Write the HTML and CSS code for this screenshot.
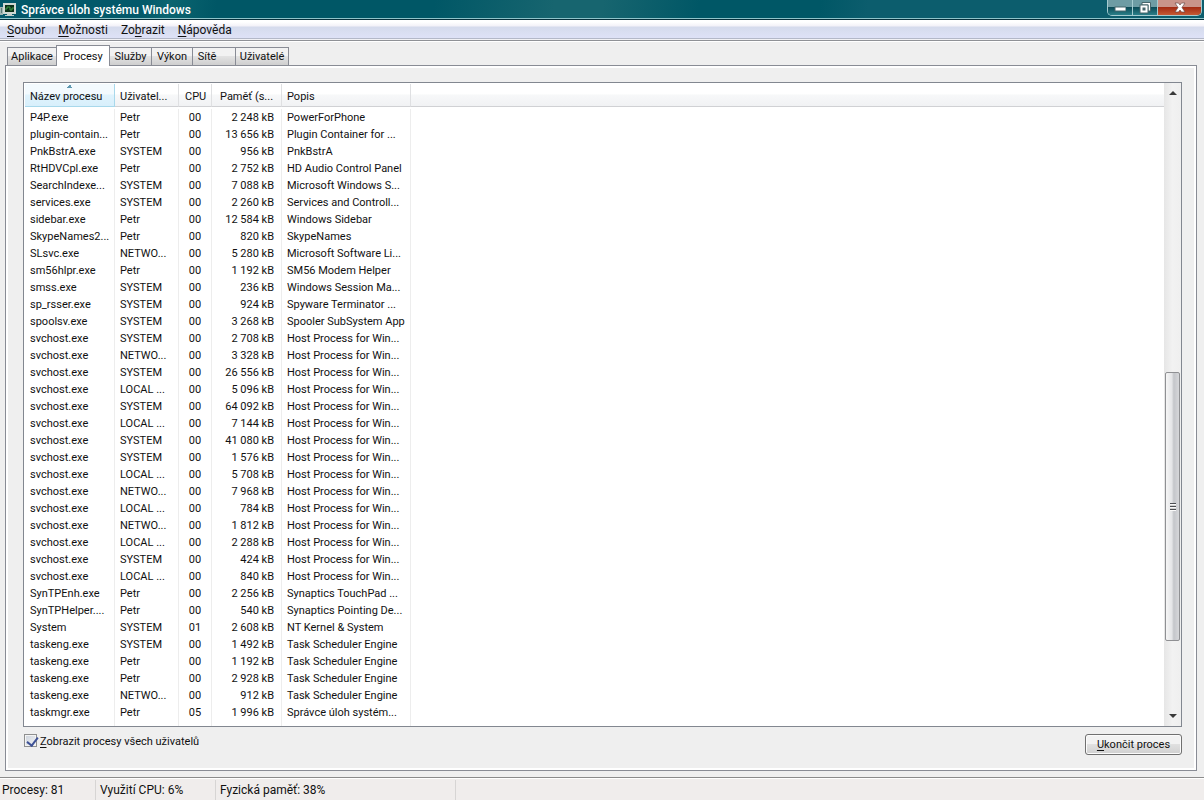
FILE: index.html
```
<!DOCTYPE html>
<html lang="cs">
<head>
<meta charset="utf-8">
<title>Správce úloh systému Windows</title>
<link rel="stylesheet" href="styles.css">
</head>
<body>
<header class="titlebar">
  <svg class="app-icon" width="17" height="16" viewBox="0 0 17 16" aria-hidden="true">
    <rect x="0" y="6" width="3" height="8" fill="#9fb5b2"/>
    <rect x="1" y="7" width="1" height="5" fill="#5e7d78"/>
    <rect x="3" y="2" width="13" height="11" fill="#cfd8d2"/>
    <rect x="5" y="4" width="9" height="7" fill="#0b3018"/>
    <path d="M5 8h2V6h3v3h2V7h2" fill="none" stroke="#3f9a45"/>
    <path d="M7 13h5v1h2v1H5v-1h2z" fill="#c3ceca"/>
  </svg>
  <h1 class="title">Správce úloh systému Windows</h1>
  <div class="window-buttons">
    <button class="wbtn" aria-label="Minimalizovat"><svg width="12" height="12" viewBox="0 0 12 12"><rect x="1" y="5" width="11" height="4" fill="#fff" stroke="#47666c"/></svg></button>
    <button class="wbtn" aria-label="Obnovit"><svg width="12" height="12" viewBox="0 0 12 12"><path d="M3 .5h8.500v8.500H9V3H3z" fill="#fff" stroke="#47666c"/><rect x="1" y="3" width="8" height="8" fill="#fff" stroke="#47666c"/><rect x="4" y="6" width="2" height="2" fill="#47666c" stroke="#47666c"/></svg></button>
    <button class="wbtn close" aria-label="Zavřít"><svg width="12" height="12" viewBox="0 0 12 12"><path d="M1 1h3.500L6 3l1.500-2H11L8 5.500 11 10H7.500L6 8l-1.500 2H1l3-4.500z" fill="#fff" stroke="#6b4a48" stroke-width=".7"/></svg></button>
  </div>
</header>
<nav class="menubar">
  <button class="menu"><u>S</u>oubor</button>
  <button class="menu"><u>M</u>ožnosti</button>
  <button class="menu">Zo<u>b</u>razit</button>
  <button class="menu"><u>N</u>ápověda</button>
</nav>
<main class="main">
  <div class="tabs" role="tablist">
    <button class="tab t1" role="tab">Aplikace</button>
    <button class="tab t2 active" role="tab" aria-selected="true">Procesy</button>
    <button class="tab t3" role="tab">Služby</button>
    <button class="tab t4" role="tab">Výkon</button>
    <button class="tab t5" role="tab">Sítě</button>
    <button class="tab t6" role="tab">Uživatelé</button>
  </div>
  <section class="panel">
    <div class="list">
      <div class="list-view">
        <table class="processes">
          <colgroup><col class="c-name"><col class="c-user"><col class="c-cpu"><col class="c-mem"><col class="c-desc"><col></colgroup>
          <thead><tr><th class="sorted">Název procesu</th><th>Uživatel...</th><th>CPU</th><th>Paměť (s...</th><th>Popis</th><th></th></tr></thead>
          <tbody>
<tr><td>P4P.exe<td>Petr<td>00<td>2 248 kB<td>PowerForPhone<td></tr>
<tr><td>plugin-contain...<td>Petr<td>00<td>13 656 kB<td>Plugin Container for ...<td></tr>
<tr><td>PnkBstrA.exe<td>SYSTEM<td>00<td>956 kB<td>PnkBstrA<td></tr>
<tr><td>RtHDVCpl.exe<td>Petr<td>00<td>2 752 kB<td>HD Audio Control Panel<td></tr>
<tr><td>SearchIndexe...<td>SYSTEM<td>00<td>7 088 kB<td>Microsoft Windows S...<td></tr>
<tr><td>services.exe<td>SYSTEM<td>00<td>2 260 kB<td>Services and Controll...<td></tr>
<tr><td>sidebar.exe<td>Petr<td>00<td>12 584 kB<td>Windows Sidebar<td></tr>
<tr><td>SkypeNames2...<td>Petr<td>00<td>820 kB<td>SkypeNames<td></tr>
<tr><td>SLsvc.exe<td>NETWO...<td>00<td>5 280 kB<td>Microsoft Software Li...<td></tr>
<tr><td>sm56hlpr.exe<td>Petr<td>00<td>1 192 kB<td>SM56 Modem Helper<td></tr>
<tr><td>smss.exe<td>SYSTEM<td>00<td>236 kB<td>Windows Session Ma...<td></tr>
<tr><td>sp_rsser.exe<td>SYSTEM<td>00<td>924 kB<td>Spyware Terminator ...<td></tr>
<tr><td>spoolsv.exe<td>SYSTEM<td>00<td>3 268 kB<td>Spooler SubSystem App<td></tr>
<tr><td>svchost.exe<td>SYSTEM<td>00<td>2 708 kB<td>Host Process for Win...<td></tr>
<tr><td>svchost.exe<td>NETWO...<td>00<td>3 328 kB<td>Host Process for Win...<td></tr>
<tr><td>svchost.exe<td>SYSTEM<td>00<td>26 556 kB<td>Host Process for Win...<td></tr>
<tr><td>svchost.exe<td>LOCAL ...<td>00<td>5 096 kB<td>Host Process for Win...<td></tr>
<tr><td>svchost.exe<td>SYSTEM<td>00<td>64 092 kB<td>Host Process for Win...<td></tr>
<tr><td>svchost.exe<td>LOCAL ...<td>00<td>7 144 kB<td>Host Process for Win...<td></tr>
<tr><td>svchost.exe<td>SYSTEM<td>00<td>41 080 kB<td>Host Process for Win...<td></tr>
<tr><td>svchost.exe<td>SYSTEM<td>00<td>1 576 kB<td>Host Process for Win...<td></tr>
<tr><td>svchost.exe<td>LOCAL ...<td>00<td>5 708 kB<td>Host Process for Win...<td></tr>
<tr><td>svchost.exe<td>NETWO...<td>00<td>7 968 kB<td>Host Process for Win...<td></tr>
<tr><td>svchost.exe<td>LOCAL ...<td>00<td>784 kB<td>Host Process for Win...<td></tr>
<tr><td>svchost.exe<td>NETWO...<td>00<td>1 812 kB<td>Host Process for Win...<td></tr>
<tr><td>svchost.exe<td>LOCAL ...<td>00<td>2 288 kB<td>Host Process for Win...<td></tr>
<tr><td>svchost.exe<td>SYSTEM<td>00<td>424 kB<td>Host Process for Win...<td></tr>
<tr><td>svchost.exe<td>LOCAL ...<td>00<td>840 kB<td>Host Process for Win...<td></tr>
<tr><td>SynTPEnh.exe<td>Petr<td>00<td>2 256 kB<td>Synaptics TouchPad ...<td></tr>
<tr><td>SynTPHelper....<td>Petr<td>00<td>540 kB<td>Synaptics Pointing De...<td></tr>
<tr><td>System<td>SYSTEM<td>01<td>2 608 kB<td>NT Kernel &amp; System<td></tr>
<tr><td>taskeng.exe<td>SYSTEM<td>00<td>1 492 kB<td>Task Scheduler Engine<td></tr>
<tr><td>taskeng.exe<td>Petr<td>00<td>1 192 kB<td>Task Scheduler Engine<td></tr>
<tr><td>taskeng.exe<td>Petr<td>00<td>2 928 kB<td>Task Scheduler Engine<td></tr>
<tr><td>taskeng.exe<td>NETWO...<td>00<td>912 kB<td>Task Scheduler Engine<td></tr>
<tr><td>taskmgr.exe<td>Petr<td>05<td>1 996 kB<td>Správce úloh systém...<td></tr>
<tr><td><td><td><td><td><td></tr>
          </tbody>
        </table>
      </div>
      <div class="scrollbar">
        <button class="arrow" aria-label="Nahoru"><svg width="8" height="4" viewBox="0 0 8 4"><path d="M0 4l4-4 4 4z" fill="#3a3a3a"/></svg></button>
        <div class="track"><div class="space-above"></div><div class="thumb"><span class="grip"></span></div><div class="space-below"></div></div>
        <button class="arrow" aria-label="Dolů"><svg width="8" height="4" viewBox="0 0 8 4"><path d="M0 0l4 4 4-4z" fill="#3a3a3a"/></svg></button>
      </div>
    </div>
    <div class="actions">
      <label class="check"><input type="checkbox" checked><span><u>Z</u>obrazit procesy všech uživatelů</span></label>
      <button class="end"><u>U</u>končit proces</button>
    </div>
  </section>
</main>
<footer class="status">
  <span class="s1">Procesy: 81</span><span class="s2">Využití CPU: 6%</span><span class="s3">Fyzická paměť: 38%</span>
</footer>
</body>
</html>
```
FILE: styles.css
```
* { box-sizing: border-box; }
body {
  margin: 0;
  height: 100vh;
  display: flex;
  flex-direction: column;
  overflow: hidden;
  background: #efefef;
  color: #111;
  font: 12px/16px Roboto, "Noto Sans", sans-serif;
}
button { font: inherit; color: inherit; margin: 0; padding: 0; border: 0; background: none; }
u { text-underline-offset: 2px; }

.titlebar {
  flex: none;
  height: 20px;
  display: flex;
  justify-content: space-between;
  background: linear-gradient(100deg, #03596a 0 12%, #0b6570 14%, #005766 18% 36%, #17656f 46%, #17656f 50%, #005766 58% 68%, #0c5d6d 72% 100%);
  border-bottom: 1px solid #07313c;
  box-shadow: inset 0 -1px #8fc4ca;
}
.app-icon { flex: none; margin-top: 1px; }
.title { flex: 1; margin: 0; padding: 2px 0 0 4px; font-size: 12px; font-weight: 500; line-height: 16px; color: #fff; }
.window-buttons {
  display: flex;
  height: 16px;
  margin-right: 2px;
  border: 1px solid #a5cbd0;
  border-top: 0;
  border-radius: 0 0 5px 5px;
  overflow: hidden;
}
.wbtn {
  width: 25px;
  display: flex;
  align-items: center;
  justify-content: center;
  border-right: 1px solid #a5cbd0;
  background: linear-gradient(#6e9ca4 0 45%, #0c4c58 50%, #2a7f89);
}
.wbtn.close { width: 43px; border: 0; background: linear-gradient(#c9948a 0 45%, #a52c14 50%, #c45a35); }

.menubar {
  flex: none;
  height: 21px;
  display: flex;
  align-items: center;
  gap: 13px;
  padding: 0 7px;
  background: linear-gradient(#fff 0 2px, #f3f1f8 6px, #d5dbec 7px, #dde1f6 17px);
  border-bottom: 1px solid #8f9196;
  box-shadow: inset 0 -1px #f1f1f5, inset 0 -2px #b3b8c8;
}

.main {
  flex: 1;
  min-height: 0;
  display: flex;
  flex-direction: column;
  padding: 3px 7px 6px 5px;
  border-top: 1px solid #fff;
}
.tabs { display: flex; align-items: flex-end; height: 20px; padding-left: 2px; font-size: 11px; }
.tab {
  height: 18px;
  margin-left: -1px;
  border: 1px solid #898c95;
  border-bottom: 0;
  background: linear-gradient(#f2f2f2 0 45%, #e2e2e2 50%, #cfcfcf);
  line-height: 18px;
}
.t1 { width: 50px; margin-left: 0; }
.t2 { width: 54px; }
.t3 { width: 43px; }
.t4 { width: 42px; }
.t5 { width: 44px; padding-right: 14px; }
.t6 { width: 54px; }
.tab.active { height: 21px; margin-bottom: -1px; background: #fff; z-index: 1; line-height: 19px; }

.panel {
  flex: 1;
  min-height: 0;
  display: flex;
  flex-direction: column;
  border: 1px solid #898c95;
  box-shadow: inset 0 0 0 2px #fff;
  padding: 16px 14px 15px 17px;
}
.list {
  flex: 1;
  min-height: 0;
  display: flex;
  border: 1px solid #828790;
  background: #fff;
}
.list-view { flex: 1; min-width: 0; overflow: hidden; padding: 1px 0 0 1px; }
.processes {
  width: 100%;
  table-layout: fixed;
  border-collapse: separate;
  border-spacing: 0;
  font-size: 11px;
  line-height: 17px;
  white-space: nowrap;
}
.c-name { width: 90px; }
.c-user { width: 64px; }
.c-cpu { width: 33px; }
.c-mem { width: 70px; }
.c-desc { width: 129px; }
.processes th {
  height: 23px;
  padding: 2px 0 0 5px;
  font-weight: 400;
  text-align: left;
  border-right: 1px solid #dfe0e2;
  border-bottom: 1px solid #d0d1d4;
  background: linear-gradient(#fff 0 45%, #f7f8f9 50%, #f1f2f4);
}
.processes th:nth-child(3) { padding-left: 6px; }
.processes th:nth-child(4) { padding-left: 8px; }
.processes th.sorted {
  background:
    conic-gradient(from 135deg at 50% 0, #5f98b0 90deg, transparent 0) 50% 1px / 6px 3px no-repeat,
    linear-gradient(#f3fafe 0 45%, #e0f3fd 50%, #d8effb);
  border-color: #a8d8eb;
}
.processes td { height: 17px; padding: 0 0 0 5px; border-right: 1px solid #ededed; }
.processes tbody::before { content: ""; display: table-row; height: 2px; }
.processes td:nth-child(3) { text-align: center; padding: 0; }
.processes td:nth-child(4) { text-align: right; padding-right: 7px; }
.processes th:last-child, .processes td:last-child { border-right: 0; }

.scrollbar { flex: none; width: 17px; display: flex; flex-direction: column; background: linear-gradient(90deg, #e6e6e6, #f2f2f2 50%, #efefef); }
.arrow { height: 20px; display: flex; align-items: center; justify-content: center; }
.track { flex: 1; display: flex; flex-direction: column; padding: 0 1px; }
.space-above { flex: 270; }
.thumb {
  flex: 268;
  display: flex;
  align-items: center;
  justify-content: center;
  border: 1px solid #8f9093;
  border-radius: 2px;
  background: linear-gradient(90deg, #f6f6f6, #e4e5e7 45%, #c4c6ca 60%, #d6d7da);
}
.space-below { flex: 65; }
.grip { width: 6px; height: 8px; background: repeating-linear-gradient(#4c4e52 0 1px, #fafafa 1px 2px, #d0d0d0 2px 3px); }

.actions { flex: none; height: 28px; display: flex; justify-content: space-between; align-items: flex-end; font-size: 11px; }
.check { display: flex; align-items: flex-start; gap: 3px; align-self: flex-start; padding-top: 7px; }
.check input {
  appearance: none;
  width: 13px;
  height: 13px;
  margin: 0 0 0 1px;
  border: 1px solid #8e8f8f;
  background: linear-gradient(135deg, #cbd2dc, #f6f6f6);
  box-shadow: inset 0 0 0 1px #f4f4f4;
  position: relative;
}
.check input:checked::after {
  content: "";
  position: absolute;
  left: 4px;
  top: 0;
  width: 5px;
  height: 9px;
  border: solid #3e5296;
  border-width: 0 2px 2px 0;
  transform: rotate(38deg);
}
.end {
  width: 97px;
  height: 21px;
  border: 1px solid #707070;
  border-radius: 3px;
  box-shadow: inset 0 0 0 1px #fbfbfb;
  background: linear-gradient(#f2f2f2 0 45%, #e0e0e0 50%, #d0d0d0);
}

.status {
  flex: none;
  height: 23px;
  display: flex;
  padding-top: 2px;
  border-top: 1px solid #8b8b8b;
  box-shadow: inset 0 1px #fff;
  background: #f0edec;
  line-height: 20px;
}
.status span { border-right: 1px solid #d7d5d4; padding-left: 4px; white-space: nowrap; }
.status .s1 { width: 96px; padding-left: 2px; }
.s2 { width: 120px; }
.s3 { width: 240px; }
```
